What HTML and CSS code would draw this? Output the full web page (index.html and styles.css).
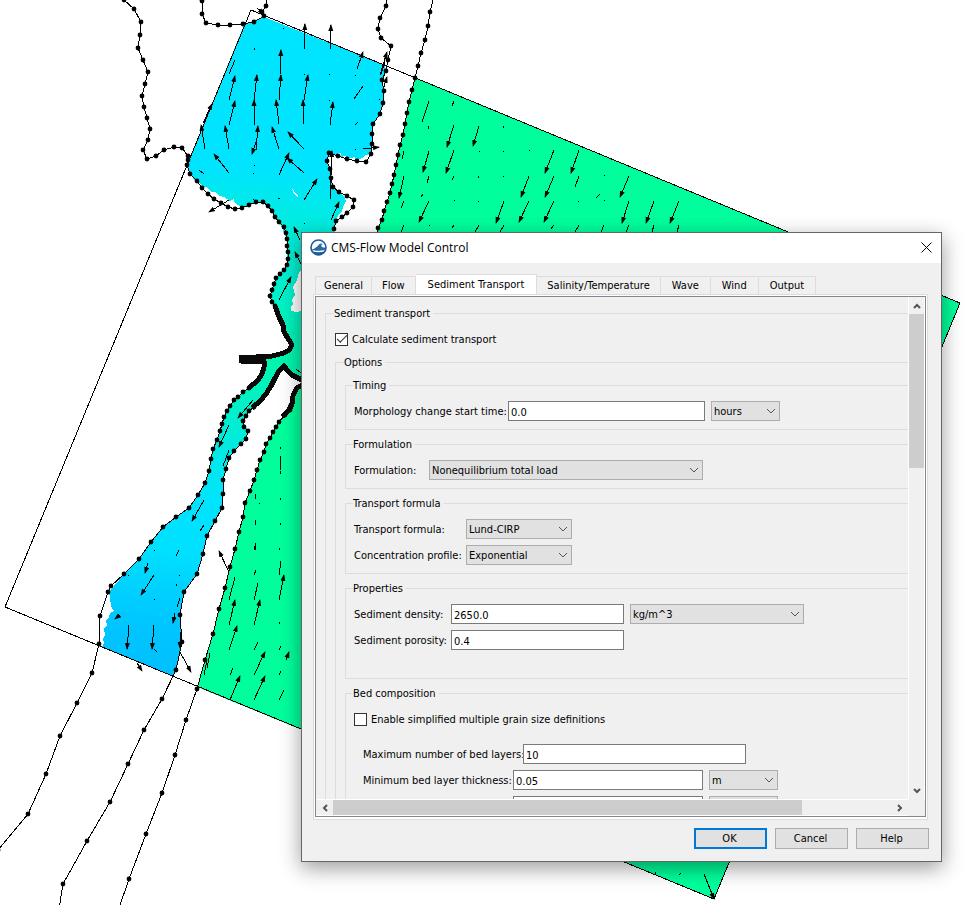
FILE: index.html
```html
<!DOCTYPE html>
<html lang="en">
<head>
<meta charset="utf-8">
<title>CMS-Flow Model Control</title>
<link rel="stylesheet" href="styles.css">
</head>
<body>
<main class="workspace">
<svg class="map" viewBox="0 0 966 905" preserveAspectRatio="xMinYMin slice" role="img" aria-label="Model domain with flow vectors">
  <defs>
    <linearGradient id="depth" gradientUnits="userSpaceOnUse" x1="200" y1="0" x2="150" y2="680">
      <stop offset="0" stop-color="#00e4ff"/>
      <stop offset=".24" stop-color="#00e4ff"/>
      <stop offset=".32" stop-color="#00edde"/>
      <stop offset=".43" stop-color="#00f2c8"/>
      <stop offset=".52" stop-color="#00f6ac"/>
      <stop offset=".6" stop-color="#00f0cc"/>
      <stop offset=".68" stop-color="#00e8ee"/>
      <stop offset=".74" stop-color="#00e3ff"/>
      <stop offset=".81" stop-color="#00e0ff"/>
      <stop offset=".87" stop-color="#00d0ff"/>
      <stop offset=".93" stop-color="#00c4ff"/>
      <stop offset="1" stop-color="#00c0ff"/>
    </linearGradient>
    <marker id="dot" markerUnits="userSpaceOnUse" markerWidth="6" markerHeight="6" refX="3" refY="3">
      <circle class="smooth" cx="3" cy="3" r="2.4"/>
    </marker>
    <marker id="head" markerUnits="userSpaceOnUse" markerWidth="8" markerHeight="6" refX="6" refY="3" orient="auto">
      <path class="smooth" d="M0 .5 7 3 0 5.500Z"/>
    </marker>
  </defs>

  <path class="sea" d="M415 78 960 303 714 899 197 687 205 660 213 634 219 609 225 588 230 567 235 549 239 532 243 517 245 503 250 491 254 480 257 470 260 460 264 452 266 444 270 438 276 427 285 415 291 405 294 395 302 384 376 236 384 211 392 184 398 155 405 124 409 102Z"/>
  <path class="bay" d="M244 25 264 17 385 65 386 71 383 80 384 91 383 103 380 114 373 124 372 134 372 144 371 151 368 155 365 155 362 158 358 160 355 160 355 157 350 158 344 156 341 157 341 153 338 153 338 156 329 153 327 161 330 169 331 178 333 187 339 192 344 196 346 201 344 205 342 211 338 216 336 221 334 232 302 250 302 270 299 272 297 280 293 287 295 295 292 300 293 304 291 306 291 311 296 312 302 311 302 379 292 375 287 370 284 366 279 371 275 378 271 386 266 394 260 401 254 407 249 411 243 421 248 431 246 439 234 451 229 458 226 469 223 480 223 494 222 508 215 521 207 536 203 554 197 574 184 592 180 615 182 642 176 670 174 676 102 647 104 643 103 639 105 635 104 628 107 625 106 620 109 617 110 613 114 611 111 606 110 598 109 592 124 574 139 559 151 542 163 527 176 517 189 508 198 495 205 483 209 471 211 459 213 449 217 440 222 424 227 411 234 400 243 392 257 382 263 373 264 361 241 361 241 358 272 356 289 350 292 345 283 330 279 317 270 296 276 278 287 265 287 239 279 222 268 206 263 202 249 205 241 208 238 205 234 202 234 199 230 201 224 197 220 196 215 192 211 192 207 187 203 187 200 183 196 182 190 174 187 165Z"/>
  <path class="land" d="M292 189 294 190 295 193 297 194 299 199 297 196 294 194Z"/>

  <path class="line" d="M251 10 960 303 714 899 5 607Z"/>

  <g class="shore">
    <polyline points="124,0 134,9 141,22 140,35 138,48 143,60 148,72 145,84 142,96 144,107 147,118 150,129 148,140 143,150 147,159 156,156 164,150 174,147 182,148 188,156 188,160 187,165 190,174 197,181 202,188 208,194 214,199 221,203 228,207 235,209 242,208 249,205 256,202 263,202 268,206 272,211 275,217 279,222 284,227 286,233 287,239 287,246 288,252 288,259 287,265 284,270 280,274 276,278 274,284 272,290 270,296 272,302 275,306 277,311 279,317 282,323"/>
    <polyline points="249,388 243,392 238,397 234,400 230,406 227,411 224,417 222,424 220,431 217,440 213,449 211,459 209,471 205,483 198,495 189,508 176,517 163,527 151,542 139,559 124,574 111,586 108,592 100,616 99,644 92,673 77,703 60,736 46,774 28,814 -2,850"/>
    <polyline points="254,407 249,411 246,416 243,421 244,427 248,431 246,439 241,444 234,451 229,458 226,469 223,480 223,494 222,508 215,521 207,536 203,554 197,574 184,592 180,615 182,642 176,670 162,699 144,730 128,764 110,802 87,841 63,884 59,909"/>
    <polyline points="291,405 290,410 285,415 279,422 276,427 273,432 270,438 266,444 264,452 260,460 257,470 254,480 250,491 245,503 243,517 239,532 235,549 230,567 225,588 219,609 213,634 205,660 197,689 186,720 175,755 162,793 146,834 129,879 118,911"/>
    <polyline points="202,1 202,14 206,23 218,25 230,25 243,24 254,22 264,16 262,12 266,6 266,-4"/>
    <polyline points="386,-4 386,6 380,18 378,29 381,38 391,46 388,60 386,71 382,80 384,91 383,103 380,114 373,124 372,134 372,144 371,154 366,162 357,161 347,159 338,156 329,153 327,161 330,169 331,178 333,187 339,192 347,196 354,200 353,207 347,213 342,217 336,221 334,229"/>
    <polyline points="434,-4 430,12 428,26 425,40 421,53 418,66 415,78 412,90 409,102 407,113 405,124 403,135 400,145 398,155 396,165 394,175 392,184 390,193 387,202 384,211 382,220 378,228 376,236"/>
  </g>

  <g class="jetty">
    <path d="M275 306 279 317 283 325 284 332 289 340 292 345 289 350 284 353 272 356 256 357 241 357 241 361 264 361 264 367 262 374 258 380 249 388"/>
    <path d="M302 380 292 375 287 370 284 366 279 371 275 378 271 386 266 394 260 401 252 408"/>
    <path d="M302 385 297 388 294 393 292 399 292 404 289 410 282 417"/>
  </g>

  <g class="arrows">
    <path d="M304 50 305 24"/><path d="M330 50 331 25"/><path d="M280 75 281 50"/><path d="M254 100 257 75"/>
    <path d="M229 100 235 76"/><path d="M279 100 281 75"/><path d="M304 100 308 75"/><path d="M229 125 235 101"/>
    <path d="M254 125 254 100"/><path d="M279 124 276 100"/><path d="M304 124 303 100"/><path d="M330 125 333 102"/>
    <path d="M205 149 201 125"/><path d="M229 149 225 126"/><path d="M256 150 258 126"/><path d="M256 142 252 154"/>
    <path d="M279 149 272 127"/><path d="M304 149 288 132"/><path d="M229 173 214 154"/><path d="M279 175 289 153"/>
    <path d="M304 173 287 158"/><path d="M304 200 317 179"/><path d="M330 200 332 151"/><path d="M331 220 339 202"/>
    <path d="M229 200 209 212"/><path d="M203 123 212 104"/><path d="M357 69 363 52"/><path d="M380 75 387 52"/>
    <path d="M383 90 387 77"/><path d="M363 149 379 147"/><path d="M300 240 294 227"/><path d="M302 266 295 252"/>
    <path d="M279 300 291 277"/><path d="M257 8 264 14"/>
    <path d="M253 400 238 418"/><path d="M229 425 219 447"/><path d="M204 500 192 521"/><path d="M148 563 145 573"/>
    <path d="M154 575 141 595"/><path d="M120 615 115 619"/><path d="M129 625 127 649"/><path d="M154 625 152 649"/>
    <path d="M137 663 142 671"/><path d="M180 652 191 672"/><path d="M180 632 180 648"/><path d="M175 613 173 623"/>
    <path d="M229 572 219 551"/><path d="M279 600 284 575"/><path d="M229 625 235 600"/><path d="M254 625 260 600"/>
    <path d="M229 650 237 626"/><path d="M254 675 265 652"/><path d="M286 660 289 652"/><path d="M230 700 240 676"/>
    <path d="M254 700 265 676"/>
    <path d="M454 125 447 147"/><path d="M454 150 446 173"/><path d="M479 126 473 146"/><path d="M429 151 423 172"/>
    <path d="M404 176 399 198"/><path d="M429 201 419 222"/><path d="M554 150 545 173"/><path d="M579 150 571 173"/>
    <path d="M529 176 521 197"/><path d="M554 176 545 197"/><path d="M629 176 620 197"/><path d="M504 201 496 223"/>
    <path d="M529 201 519 222"/><path d="M554 201 544 222"/><path d="M629 201 622 223"/><path d="M654 201 646 223"/>
    <path d="M679 201 670 223"/><path d="M704 874 714 899"/>
  </g>

  <path class="line" d="M229 74 235 60M354 99 363 86M355 125 358 122M199 170 204 174M381 74 385 62M229 450 223 466M204 525 200 531M280 456V470M280 471V474M280 447V449M255 494V499M255 520V525M255 543V550M280 498V500M280 523V525M259 503V504M279 575 281 561M254 600 258 583M229 600 235 577M254 550 256 543M254 575 256 570M279 550 280 548M254 650 258 642M279 650 281 646M230 675 233 668M279 700 284 690M279 675 281 671M176 556 179 550M177 607 180 598M204 675 207 660M207 668 210 653M279 624 280 622M254 624 255 622M154 649 157 652M176 584V586M179 575H180M154 550H155M154 599H155M128 575H129M254 48V50M283 23V24M283 28V29M304 74H305M329 74H330M329 100H330M355 75H356M355 149H356M254 165H255M253 173H254M253 199H254M278 198 280 199M304 223H305M379 99H380
    M429 101 422 122M454 101 452 106M429 126 428 129M504 126 503 128M404 151 402 159M579 176 575 187M600 194 596 198M429 176 427 183M454 176 452 180M423 194 421 197M404 201 401 208M404 225 401 232M429 225H430M454 225 452 228M479 225 475 232M504 225 500 232M554 225 551 229M579 225 575 232M604 225 601 232M629 225 626 232M654 225 652 232M679 225 677 232M479 151H480M504 151 503 152M529 150H530M479 176 478 178M504 176 503 177M604 175H605M454 200H455M479 201 478 202M579 201 578 202M604 200H605M655 872 656 875M681 873 679 875M296 369 301 373"/>
</svg>

<section class="dialog" role="dialog" aria-labelledby="dialog-title">
  <header class="titlebar">
    <svg class="logo" viewBox="0 0 17 17" aria-hidden="true">
      <circle cx="8.500" cy="8.500" r="7.500" fill="#fff" stroke="#1a5c99" stroke-width="1.600"/>
      <path fill="#2a6aa5" d="M2 10.500C5 9.500 7 8 9 5.500C10 4.300 12 4 13 5.200C12 5 11.200 5.600 11.300 6.700C11.500 8 13 8.600 15 8.600L15 11C12 12 5 12 2 11.300Z"/>
      <path fill="#1a5c99" d="M2.500 12.500C6 13.600 11 13.600 14.500 12.500C13 15.300 11 16 8.500 16S4 15.300 2.500 12.500Z"/>
    </svg>
    <h1 class="title" id="dialog-title">CMS-Flow Model Control</h1>
    <button class="close" type="button" aria-label="Close">
      <svg width="11" height="11" viewBox="0 0 11 11" aria-hidden="true"><path d="M.5.500 10.500 10.500M10.500.500.500 10.500"/></svg>
    </button>
  </header>

  <div class="tabs" role="tablist">
    <button class="tab" role="tab" type="button">General</button>
    <button class="tab" role="tab" type="button">Flow</button>
    <button class="tab active" role="tab" type="button" aria-selected="true">Sediment Transport</button>
    <button class="tab" role="tab" type="button">Salinity/Temperature</button>
    <button class="tab short" role="tab" type="button">Wave</button>
    <button class="tab short" role="tab" type="button">Wind</button>
    <button class="tab short" role="tab" type="button">Output</button>
  </div>

  <div class="pane">
    <div class="scrollarea">
      <form class="viewport">
        <fieldset class="group outer">
          <legend>Sediment transport</legend>
          <div class="row"><input type="checkbox" id="calc" checked><label class="check" for="calc">Calculate sediment transport</label></div>
          <fieldset class="group options">
            <legend>Options</legend>

            <fieldset class="group timing">
              <legend>Timing</legend>
              <div class="row">
                <label for="start">Morphology change start time:</label>
                <input type="text" id="start" value="0.0">
                <span class="combo unit"><select aria-label="Start time unit"><option>hours</option></select><svg viewBox="0 0 10 6" aria-hidden="true"><path d="M1 1 5 5 9 1"/></svg></span>
              </div>
            </fieldset>

            <fieldset class="group formulation">
              <legend>Formulation</legend>
              <div class="row">
                <label for="formulation">Formulation:</label>
                <span class="combo"><select id="formulation"><option>Nonequilibrium total load</option></select><svg viewBox="0 0 10 6" aria-hidden="true"><path d="M1 1 5 5 9 1"/></svg></span>
              </div>
            </fieldset>

            <fieldset class="group transport">
              <legend>Transport formula</legend>
              <div class="row">
                <label for="formula">Transport formula:</label>
                <span class="combo"><select id="formula"><option>Lund-CIRP</option></select><svg viewBox="0 0 10 6" aria-hidden="true"><path d="M1 1 5 5 9 1"/></svg></span>
              </div>
              <div class="row">
                <label for="profile">Concentration profile:</label>
                <span class="combo"><select id="profile"><option>Exponential</option></select><svg viewBox="0 0 10 6" aria-hidden="true"><path d="M1 1 5 5 9 1"/></svg></span>
              </div>
            </fieldset>

            <fieldset class="group properties">
              <legend>Properties</legend>
              <div class="row">
                <label for="density">Sediment density:</label>
                <input type="text" id="density" value="2650.0">
                <span class="combo"><select aria-label="Density unit"><option>kg/m^3</option></select><svg viewBox="0 0 10 6" aria-hidden="true"><path d="M1 1 5 5 9 1"/></svg></span>
              </div>
              <div class="row">
                <label for="porosity">Sediment porosity:</label>
                <input type="text" id="porosity" value="0.4">
              </div>
            </fieldset>

            <fieldset class="group bed">
              <legend>Bed composition</legend>
              <div class="row"><input type="checkbox" id="simple"><label class="check" for="simple">Enable simplified multiple grain size definitions</label></div>
              <div class="bed-rows">
                <div class="row layers">
                  <label for="layers">Maximum number of bed layers:</label>
                  <input type="text" id="layers" value="10">
                </div>
                <div class="row">
                  <label for="thickness">Minimum bed layer thickness:</label>
                  <input type="text" id="thickness" value="0.05">
                  <span class="combo unit"><select aria-label="Thickness unit"><option>m</option></select><svg viewBox="0 0 10 6" aria-hidden="true"><path d="M1 1 5 5 9 1"/></svg></span>
                </div>
                <div class="row">
                  <label></label>
                  <input type="text" aria-label="Bed layer value">
                  <span class="combo unit"><select aria-label="Bed layer unit"><option></option></select></span>
                </div>
              </div>
            </fieldset>
          </fieldset>
        </fieldset>
      </form>
      <div class="vbar">
        <svg viewBox="0 0 8 6" aria-hidden="true"><path d="M1 5 4 2 7 5"/></svg>
        <div class="track"><div class="thumb"></div></div>
        <svg viewBox="0 0 8 6" aria-hidden="true"><path d="M1 1 4 4 7 1"/></svg>
      </div>
      <div class="hbar">
        <svg viewBox="0 0 6 8" aria-hidden="true"><path d="M5 1 2 4 5 7"/></svg>
        <div class="track"><div class="thumb"></div></div>
        <svg viewBox="0 0 6 8" aria-hidden="true"><path d="M1 1 4 4 1 7"/></svg>
      </div>
    </div>
  </div>

  <footer class="actions">
    <button class="btn default" type="button">OK</button>
    <button class="btn" type="button">Cancel</button>
    <button class="btn" type="button">Help</button>
  </footer>
</section>
</main>
</body>
</html>
```
FILE: styles.css
```css
* {
  box-sizing: border-box;
}

body {
  margin: 0;
  background: #fff;
  color: #000;
  font: 11px/16px "DejaVu Sans Condensed", "Liberation Sans", sans-serif;
}

button,
input,
select {
  margin: 0;
  color: inherit;
  font: inherit;
}

.workspace {
  position: relative;
  min-height: 100vh;
  overflow: hidden;
}

/* Map */

.map {
  position: absolute;
  inset: 0;
  width: 100%;
  height: 100%;
  shape-rendering: crispEdges;
}

.smooth {
  shape-rendering: geometricPrecision;
}

.sea {
  fill: #00ff9c;
}

.bay {
  fill: url(#depth);
}

.land {
  fill: #fff;
}

.line,
.shore polyline,
.arrows path {
  fill: none;
  stroke: #000;
  stroke-width: 1;
}

.shore polyline {
  marker: url(#dot);
}

.arrows path {
  marker-end: url(#head);
}

.jetty path {
  fill: none;
  stroke: #0a0a0a;
  stroke-width: 5;
  stroke-linejoin: round;
}

/* Dialog window */

.dialog {
  position: absolute;
  top: 232px;
  left: 301px;
  display: flex;
  flex-direction: column;
  width: 641px;
  border: 1px solid #666;
  background: #f0f0f0;
  box-shadow: 0 6px 20px rgba(0, 0, 0, 0.4);
}

.titlebar {
  display: flex;
  align-items: center;
  gap: 4px;
  height: 30px;
  padding: 0 9px 2px 8px;
  background: #fff;
}

.logo {
  width: 17px;
  height: 17px;
}

.title {
  flex: 1;
  margin: 0;
  padding-top: 2px;
  font: 12px/16px "Open Sans", "Noto Sans", sans-serif;
}

.close {
  display: flex;
  padding: 0;
  border: 0;
  background: none;
}

.close path {
  fill: none;
  stroke: #000;
}

/* Tabs */

.tabs {
  display: flex;
  align-items: flex-end;
  padding: 11px 0 0 13px;
}

.tab {
  height: 18px;
  padding: 1px 10px 0;
  border: 1px solid #dcdcdc;
  border-width: 1px 1px 0 0;
  background: #f0f0f0;
}

.tab:first-child {
  padding: 1px 8px 0;
  border-left-width: 1px;
}

.tab.short {
  padding: 1px 11px 0;
}

.tab.active {
  height: 20px;
  padding: 0 12px;
  background: #fff;
}

.pane {
  margin: 0 13px 0 11px;
  padding: 1px 1px 2px;
  border: 1px solid #dcdcdc;
  background: #fff;
}

.scrollarea {
  display: grid;
  grid-template-columns: 1fr 17px;
  grid-template-rows: 502px 17px;
  border: 1px solid #828790;
  background: #f0f0f0;
}

.viewport {
  overflow: hidden;
  padding: 8px 0 0 9px;
}

/* Groups */

.group {
  min-width: 0;
  margin: 0;
  padding: 8px 0 8px 8px;
  border: 1px solid #dcdcdc;
  border-right: 0;
}

.group > legend {
  margin-left: -1px;
  padding: 2px 3px 0 0;
  line-height: 14px;
}

.outer {
  padding: 8px 0 0 9px;
}

.options {
  display: flow-root;
  margin-top: 5px;
  padding: 7px 0 0 9px;
}

.group + .group {
  margin-top: 6px;
}

.row {
  display: flex;
  align-items: center;
  gap: 6px;
  height: 20px;
}

.row + .row {
  margin-top: 6px;
}

.row label {
  flex: none;
  padding-top: 2px;
  white-space: nowrap;
}

input[type="text"] {
  width: 197px;
  height: 20px;
  padding: 2px 2px 0;
  border: 1px solid #7a7a7a;
  background: #fff;
}

input[type="checkbox"] {
  display: grid;
  place-items: center;
  width: 13px;
  height: 13px;
  appearance: none;
  border: 1px solid #333;
  background: #fff;
}

input[type="checkbox"]:checked::before {
  width: 9px;
  height: 4px;
  margin-bottom: 3px;
  border: solid #333;
  border-width: 0 0 1px 1px;
  content: "";
  transform: rotate(-45deg);
}

.row .check {
  margin-left: -2px;
}

.combo {
  position: relative;
  height: 20px;
}

.combo select {
  display: block;
  width: 100%;
  height: 20px;
  padding: 2px 2px 0;
  appearance: none;
  border: 1px solid #adadad;
  border-radius: 0;
  background: #e1e1e1;
}

.combo svg {
  position: absolute;
  top: 7px;
  right: 4px;
  width: 10px;
  height: 6px;
  pointer-events: none;
}

.combo path {
  fill: none;
  stroke: #555;
}

.row .unit {
  width: 69px;
}

.timing label {
  width: 148px;
}

.formulation label {
  width: 69px;
}

.formulation .combo {
  width: 274px;
}

.transport label {
  width: 106px;
}

.transport .combo {
  width: 106px;
}

.properties {
  padding-bottom: 28px;
}

.properties label {
  width: 91px;
}

.properties input {
  width: 173px;
}

.properties .combo {
  width: 174px;
}

.bed-rows {
  margin-top: 15px;
  padding-left: 9px;
}

.bed-rows label {
  width: 144px;
}

.bed-rows input {
  width: 190px;
}

.bed-rows .layers label {
  width: 154px;
}

.bed-rows .layers input {
  width: 223px;
}

/* Scroll bars */

.vbar,
.hbar {
  display: flex;
  align-items: center;
}

.vbar {
  flex-direction: column;
  border: solid #fff;
  border-width: 0 1px;
}

.hbar {
  border: solid #fff;
  border-width: 1px 0;
}

.vbar svg {
  width: 8px;
  height: 6px;
  margin: 6px 0 5px;
}

.hbar svg {
  width: 6px;
  height: 8px;
  margin: 0 5px 0 6px;
}

.vbar path,
.hbar path {
  fill: none;
  stroke: #555;
  stroke-width: 2;
}

.track {
  flex: 1;
}

.vbar .track {
  width: 15px;
}

.vbar .thumb {
  height: 33%;
  background: #cdcdcd;
}

.hbar .track {
  height: 15px;
}

.hbar .thumb {
  width: 84%;
  height: 15px;
  background: #cdcdcd;
}

/* Footer */

.actions {
  display: flex;
  justify-content: flex-end;
  gap: 8px;
  padding: 8px 12px 12px;
}

.btn {
  width: 73px;
  height: 21px;
  padding: 1px 2px 0 0;
  border: 1px solid #adadad;
  background: #e1e1e1;
}

.btn.default {
  border: 2px solid #0078d7;
}
```
